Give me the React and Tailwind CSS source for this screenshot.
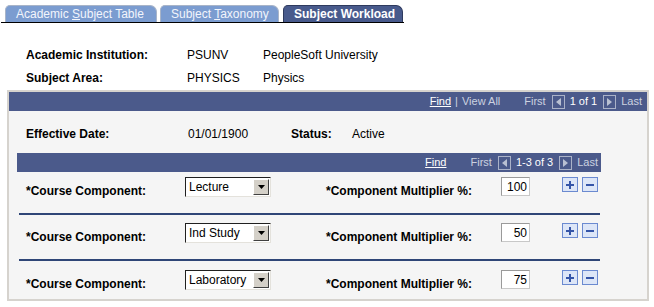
import React from 'react';

const Tab = ({ children, active, className = '' }) => (
  <div
    className={`h-[17px] flex items-center px-[10px] rounded-tl-[5px] rounded-tr-[7px] border border-b-0 whitespace-nowrap ${
      active
        ? 'bg-[#485a8c] border-[#2e3a5e] text-white font-bold'
        : 'bg-[#7b9cd0] border-[#a8b4c8] text-[#f2f5fc]'
    } ${className}`}
  >
    <span>{children}</span>
  </div>
);

const NavBox = ({ dir }) => (
  <div className="w-[13px] h-[14px] border border-[#aab2c8] flex items-center justify-center">
    <svg width="5" height="8" viewBox="0 0 5 8">
      {dir === 'left' ? <path d="M5 0v8L0 4z" fill="#b9c0d2" /> : <path d="M0 0v8l5-4z" fill="#b9c0d2" />}
    </svg>
  </div>
);

const GridBar = ({ range, viewAll, className = '' }) => (
  <div className={`h-[19px] bg-[#4b5a8b] flex items-center justify-end text-[11px] leading-[13px] text-[#ccd2e0] ${className}`}>
    <span className="text-white underline">Find</span>
    {viewAll && (
      <>
        <span className="ml-[4px]">|</span>
        <span className="ml-[4px]">View All</span>
      </>
    )}
    <span className="ml-[24px]">First</span>
    <div className="ml-[6px]">
      <NavBox dir="left" />
    </div>
    <span className="ml-[5px] text-white">{range}</span>
    <div className="ml-[6px]">
      <NavBox dir="right" />
    </div>
    <span className="ml-[5px]">Last</span>
  </div>
);

const Select = ({ value }) => (
  <div className="w-[86px] h-[20px] bg-white border border-t-[#202020] border-l-[#202020] border-r-[#e4e2dc] border-b-[#e4e2dc] flex items-center">
    <span className="flex-1 pl-[3px] leading-[14px]">{value}</span>
    <div className="w-[16px] h-[16px] mr-[1px] bg-[#d4d0c8] border border-t-white border-l-white border-r-[#404040] border-b-[#404040] flex items-center justify-center">
      <svg width="7" height="4" viewBox="0 0 7 4">
        <path d="M0 0h7L3.5 4z" fill="#000" />
      </svg>
    </div>
  </div>
);

const RowButton = ({ plus }) => (
  <div className="w-[16px] h-[15px] bg-[#dde6f7] border border-[#6b8ad0] flex items-center justify-center">
    <svg width="10" height="10" viewBox="0 0 10 10">
      <path d="M1 5h8" stroke="#3555a8" strokeWidth="2" />
      {plus && <path d="M5 1v8" stroke="#3555a8" strokeWidth="2" />}
    </svg>
  </div>
);

const Row = ({ comp, mult, pad, h, sep }) => (
  <>
    <div className={`flex items-start pl-[9px] ${pad} ${h}`}>
      <div className="w-[159px] mt-[7px] font-bold leading-[14px]">*Course Component:</div>
      <Select value={comp} />
      <div className="w-[175px] ml-[55px] mt-[7px] font-bold leading-[14px]">*Component Multiplier %:</div>
      <div className="w-[29px] h-[19px] bg-white border border-t-[#9a9a9a] border-l-[#9a9a9a] border-r-[#c8c8c8] border-b-[#c8c8c8] flex items-center justify-end pr-[2px] leading-[14px]">
        {mult}
      </div>
      <div className="ml-[32px] flex gap-[4px]">
        <RowButton plus />
        <RowButton />
      </div>
    </div>
    {sep && <div className="ml-[2px] w-[581px] h-[2px] bg-[#2f4677]" />}
  </>
);

export default function App() {
  return (
    <div className="w-[654px] h-[307px] bg-white overflow-hidden text-[12px] text-black font-['Liberation_Sans',Arial,sans-serif]">
      {/* tabs */}
      <div className="pt-[5px] pl-[1px]">
        <div className="w-[403px] h-[18px] border-b border-black flex items-end pl-[4px]">
          <Tab className="w-[152px]">
            Academic <span className="underline">S</span>ubject Table
          </Tab>
          <Tab className="w-[119px] ml-[3px]">
            Subject <span className="underline">T</span>axonomy
          </Tab>
          <Tab active className="w-[120px] ml-[4px]">
            Subject Workload
          </Tab>
        </div>
      </div>

      {/* key fields */}
      <div className="pt-[20px] pl-[26px] leading-[14px]">
        <div className="h-[23px] flex items-center">
          <div className="w-[161px] font-bold">Academic Institution:</div>
          <div className="w-[76px]">PSUNV</div>
          <div>PeopleSoft University</div>
        </div>
        <div className="h-[24px] flex items-center">
          <div className="w-[161px] font-bold">Subject Area:</div>
          <div className="w-[76px]">PHYSICS</div>
          <div>Physics</div>
        </div>
      </div>

      {/* effective-dated scroll */}
      <div className="ml-[7px] w-[642px] h-[211px] border-2 border-[#d6d3ce] bg-[#f5f5f5] flex flex-col">
        <GridBar range="1 of 1" viewAll className="pr-[5px]" />
        <div className="h-[42px] flex items-center pt-[4px] pl-[17px] leading-[14px]">
          <div className="w-[162px] font-bold">Effective Date:</div>
          <div className="w-[103px]">01/01/1900</div>
          <div className="w-[61px] font-bold">Status:</div>
          <div>Active</div>
        </div>
        <div className="ml-[8px] w-[584px]">
          <GridBar range="1-3 of 3" className="pr-[3px]" />
          <Row comp="Lecture" mult="100" pad="pt-[5px]" h="h-[41px]" sep />
          <Row comp="Ind Study" mult="50" pad="pt-[8px]" h="h-[44px]" sep />
          <Row comp="Laboratory" mult="75" pad="pt-[9px]" h="h-[36px]" />
        </div>
      </div>
    </div>
  );
}
